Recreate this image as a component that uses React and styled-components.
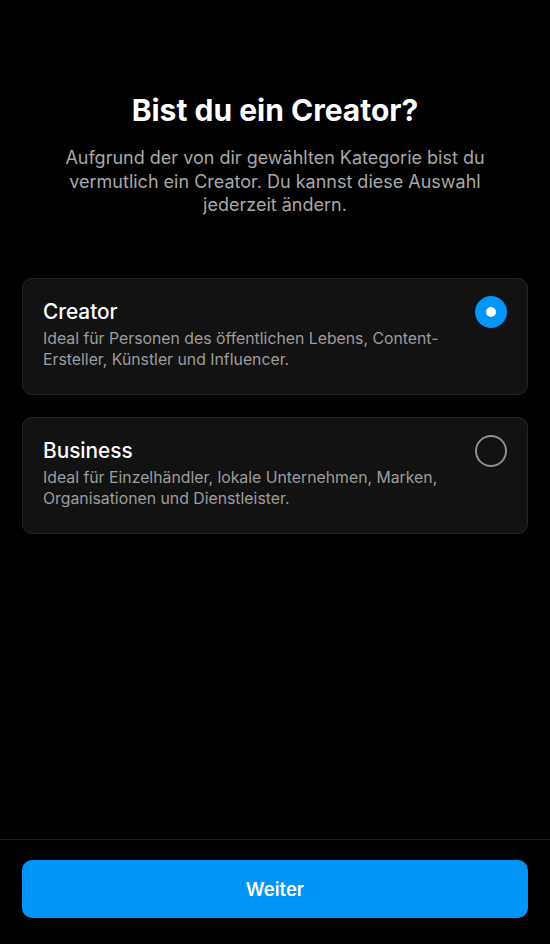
import React, { useState } from "react";
import styled, { createGlobalStyle } from "styled-components";

const GlobalStyle = createGlobalStyle`
  html, body {
    margin: 0;
    padding: 0;
    background: #000;
  }
  body {
    font-family: Inter, "Noto Sans", "Liberation Sans", sans-serif;
    -webkit-font-smoothing: antialiased;
  }
`;

const Page = styled.div`
  display: flex;
  flex-direction: column;
  min-height: 944px;
  background: #000;
  color: #f5f5f5;
`;

const Content = styled.div`
  flex: 1;
  display: flex;
  flex-direction: column;
  padding: 92px 22px 0;
`;

const Title = styled.h1`
  margin: 0;
  text-align: center;
  font-size: 30px;
  font-weight: 700;
  line-height: 36px;
  color: #fff;
`;

const Subtitle = styled.p`
  margin: 18px 30px 0;
  text-align: center;
  font-size: 18px;
  line-height: 23.5px;
  color: #a8a8a8;
`;

const Options = styled.div`
  display: flex;
  flex-direction: column;
  gap: 22px;
  margin-top: 61px;
`;

const Card = styled.div`
  display: flex;
  align-items: flex-start;
  justify-content: space-between;
  gap: 12px;
  padding: 20px 20px 24px 20px;
  background: #121212;
  border: 1px solid #262626;
  border-radius: 10px;
  cursor: pointer;
`;

const CardText = styled.div`
  display: flex;
  flex-direction: column;
  gap: 3px;
`;

const CardTitle = styled.div`
  font-size: 20.8px;
  font-weight: 500;
  line-height: 26px;
  color: #fff;
`;

const CardDesc = styled.div`
  font-size: 15.8px;
  line-height: 21px;
  color: #9c9c9c;
  max-width: 412px;
`;

const Radio = styled.div`
  flex: none;
  width: 32px;
  height: 32px;
  margin-top: -3px;
  border-radius: 50%;
  box-sizing: border-box;
  display: flex;
  align-items: center;
  justify-content: center;
  background: ${(p) => (p.$checked ? "#0095f6" : "transparent")};
  border: ${(p) => (p.$checked ? "none" : "2px solid #8e8e8e")};

  &::after {
    content: "";
    display: ${(p) => (p.$checked ? "block" : "none")};
    width: 10px;
    height: 10px;
    border-radius: 50%;
    background: #fff;
  }
`;

const Footer = styled.div`
  border-top: 1px solid #1c1c1c;
  padding: 20px 22px 26px;
`;

const Button = styled.button`
  width: 100%;
  height: 58px;
  border: none;
  border-radius: 10px;
  background: #0095f6;
  color: #fff;
  font-family: inherit;
  font-size: 18.5px;
  font-weight: 600;
  cursor: pointer;
`;

const options = [
  {
    id: "creator",
    title: "Creator",
    desc: "Ideal für Personen des öffentlichen Lebens, Content-Ersteller, Künstler und Influencer.",
  },
  {
    id: "business",
    title: "Business",
    desc: "Ideal für Einzelhändler, lokale Unternehmen, Marken, Organisationen und Dienstleister.",
  },
];

export default function App() {
  const [selected, setSelected] = useState("creator");

  return (
    <Page>
      <GlobalStyle />
      <Content>
        <Title>Bist du ein Creator?</Title>
        <Subtitle>
          Aufgrund der von dir gewählten Kategorie bist du vermutlich ein
          Creator. Du kannst diese Auswahl jederzeit ändern.
        </Subtitle>
        <Options>
          {options.map((o) => (
            <Card key={o.id} onClick={() => setSelected(o.id)}>
              <CardText>
                <CardTitle>{o.title}</CardTitle>
                <CardDesc>{o.desc}</CardDesc>
              </CardText>
              <Radio $checked={selected === o.id} />
            </Card>
          ))}
        </Options>
      </Content>
      <Footer>
        <Button>Weiter</Button>
      </Footer>
    </Page>
  );
}
